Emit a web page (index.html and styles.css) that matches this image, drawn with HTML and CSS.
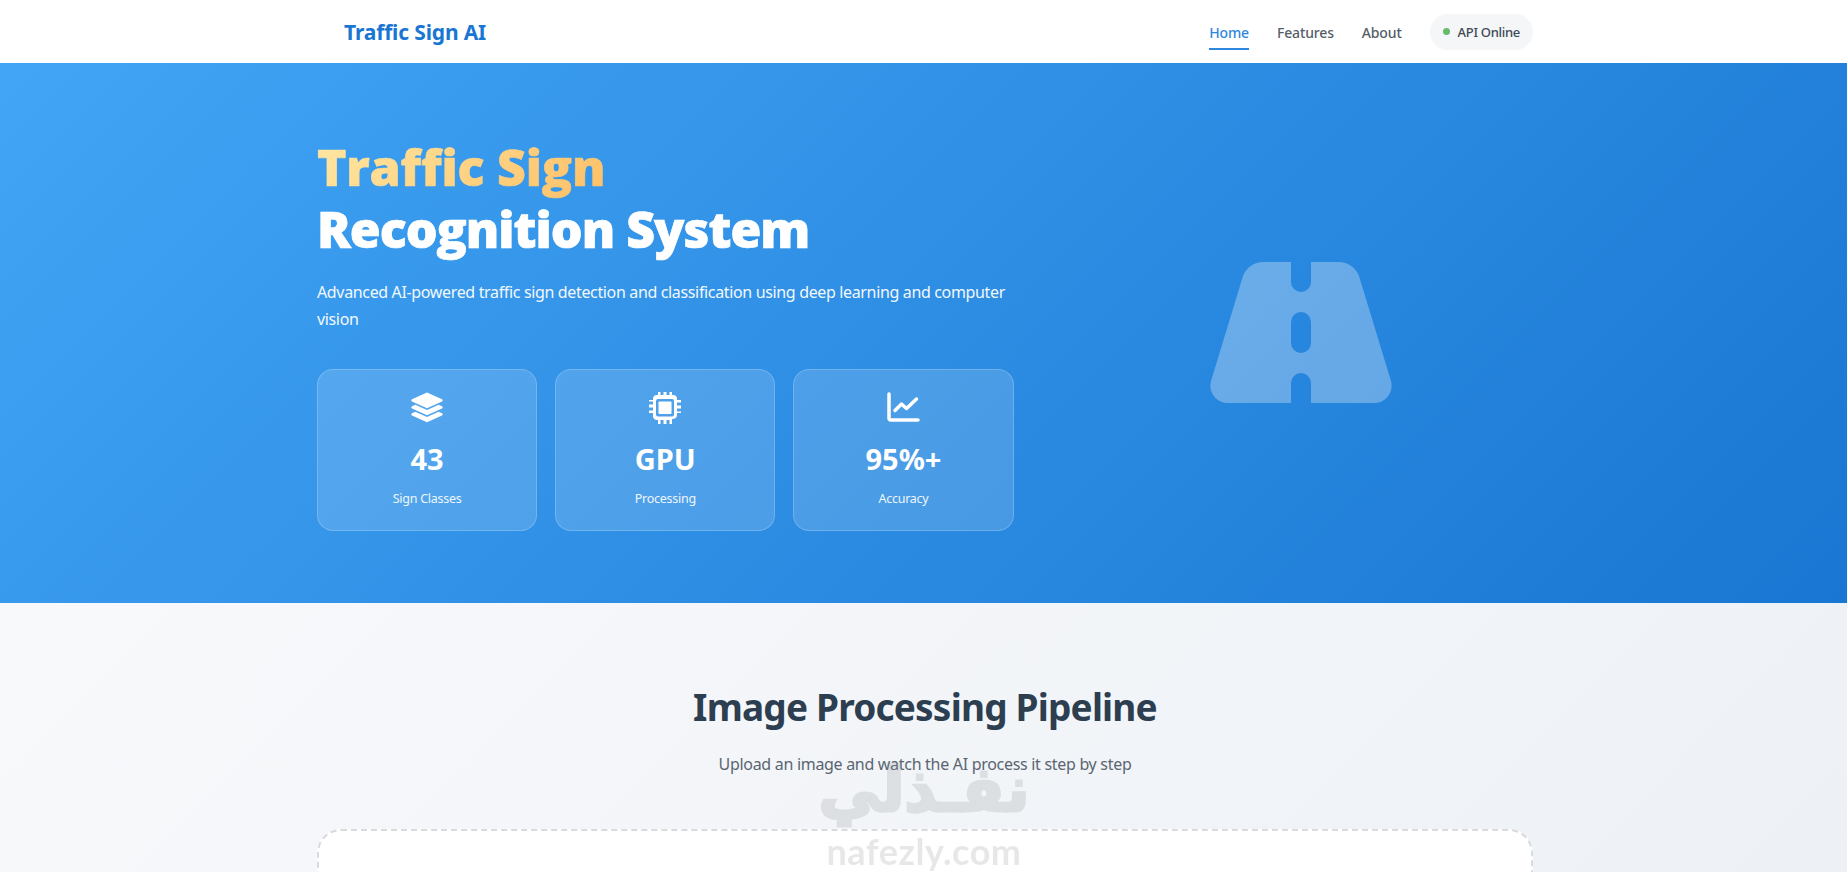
FILE: index.html
```html
<!DOCTYPE html>
<html>
  <head>
    <title>Traffic Sign AI</title>
    <meta charset="utf-8">
    <meta name="viewport" content="width=device-width, initial-scale=1">
    <link rel="stylesheet" href="styles.css">
  </head>
  <body>
    <header class="navbar">
      <div class="nav-inner">
        <a class="logo" href="#">Traffic Sign AI</a>
        <nav class="nav-links">
          <a class="nav-link active" href="#">Home</a>
          <a class="nav-link" href="#">Features</a>
          <a class="nav-link" href="#">About</a>
          <div class="status-pill"><span class="status-dot"></span>API Online</div>
        </nav>
      </div>
    </header>

    <section class="hero">
      <div class="hero-inner">
        <div class="hero-text">
          <h1 class="hero-title"><span class="gradient-text">Traffic Sign</span><br><span class="title-line">Recognition System</span></h1>
          <p class="hero-desc">Advanced AI-powered traffic sign detection and classification using deep learning and computer vision</p>
          <div class="stats">
            <div class="stat-card">
              <svg class="stat-icon" viewBox="0 0 34 34"><path d="M17 1.500 32 8.200c.9.5.9 1.700 0 2.200L17 17.200 2 10.400c-.9-.5-.9-1.700 0-2.200z"/><path d="M5.300 13.700 17 19l11.700-5.300 3.300 1.500c.9.5.9 1.700 0 2.200L17 24.200 2 17.400c-.9-.5-.9-1.700 0-2.200z"/><path d="M5.300 20.700 17 26l11.700-5.300 3.300 1.500c.9.5.9 1.700 0 2.200L17 31.200 2 24.400c-.9-.5-.9-1.700 0-2.200z"/></svg>
              <div class="stat-value">43</div>
              <div class="stat-label">Sign Classes</div>
            </div>
            <div class="stat-card">
              <svg class="stat-icon" viewBox="0 0 34 34"><path fill-rule="evenodd" d="M10 1h2.500v3h3V1h3v3h3V1H24v3h1a4 4 0 0 1 4 4v1h4v2.500h-4v3h4v3h-4v3h4V22h-4v1.500a4.500 4.500 0 0 1-4 4.500h-1v5h-2.500v-4h-3v4h-3v-4h-3v4H10v-4H9a4 4 0 0 1-4-4.500V22H1v-2.500h4v-3H1v-3h4v-3H1V9h4V8a4 4 0 0 1 4-4h1zM10 8a2 2 0 0 0-2 2v13.500a2 2 0 0 0 2 2h14a2 2 0 0 0 2-2V10a2 2 0 0 0-2-2z"/><rect x="10.500" y="10.500" width="13" height="12.500" rx="1"/></svg>
              <div class="stat-value">GPU</div>
              <div class="stat-label">Processing</div>
            </div>
            <div class="stat-card">
              <svg class="stat-icon" viewBox="0 0 34 34"><path class="chart-line" d="M3 3v24a2 2 0 0 0 2 2h27"/><path class="chart-line" d="M9 19.500l6.500-6.500 5 4.500L30.500 8"/></svg>
              <div class="stat-value">95%+</div>
              <div class="stat-label">Accuracy</div>
            </div>
          </div>
        </div>
        <div class="hero-visual">
          <svg class="road-icon" viewBox="0 0 182 141"><path class="road-shape" fill-rule="evenodd" d="M53 0H81V20a10 10 0 0 0 20 0V0H129c9 0 17 6 20 14l32 105c3 11-5 22-17 22H101V121a10 10 0 0 0-20 0V141H18C6 141-2 130 1 119L33 14C36 6 44 0 53 0zM91 50a10 10 0 0 0-10 10V81a10 10 0 0 0 20 0V60a10 10 0 0 0-10-10z"/></svg>
        </div>
      </div>
    </section>

    <main class="pipeline">
      <div class="pipeline-inner">
        <h2 class="section-title">Image Processing Pipeline</h2>
        <p class="section-sub">Upload an image and watch the AI process it step by step</p>
        <div class="upload-box"></div>
      </div>
    </main>

    <div class="watermark">
      <div class="wm-arabic" lang="ar" dir="rtl">نفـذلي</div>
      <div class="wm-latin">nafezly.com</div>
    </div>
  </body>
</html>
```

FILE: styles.css
```css
* {
  box-sizing: border-box;
  margin: 0;
  padding: 0;
}
html, body {
  height: 100%;
  overflow: hidden;
}
body {
  font-family: "Noto Sans", "Open Sans", sans-serif;
  background: #f5f7fa;
  color: #2c3e50;
  position: relative;
}
a {
  text-decoration: none;
}
.navbar {
  height: 63px;
  background: #fff;
}
.nav-inner {
  width: 1216px;
  height: 100%;
  margin-left: 317px;
  padding-left: 27px;
  display: flex;
  align-items: center;
  justify-content: space-between;
}
.logo {
  font-size: 21px;
  font-weight: 700;
  letter-spacing: -0.15px;
  color: #1976d2;
}
.nav-links {
  display: flex;
  align-items: center;
  gap: 28px;
}
.nav-link {
  font-size: 14px;
  font-weight: 500;
  letter-spacing: -0.15px;
  color: #555e68;
  padding: 9px 0 6px;
  border-bottom: 2px solid transparent;
}
.nav-link.active {
  color: #2f88dd;
  border-bottom-color: #2f88dd;
}
.status-pill {
  display: flex;
  align-items: center;
  gap: 8px;
  height: 36px;
  padding: 0 13px;
  border-radius: 18px;
  background: #f4f6f8;
  font-size: 13px;
  font-weight: 500;
  letter-spacing: -0.3px;
  color: #3f4a55;
}
.status-dot {
  width: 7px;
  height: 7px;
  border-radius: 50%;
  background: #66bb6a;
}
.hero {
  height: 540px;
  background: linear-gradient(135deg, #42a5f5 0%, #1976d2 100%);
  color: #fff;
}
.hero-inner {
  width: 1216px;
  height: 100%;
  margin-left: 317px;
  display: grid;
  grid-template-columns: 1.5fr 1fr;
  gap: 55px;
  align-items: center;
}
.hero-text {
  align-self: start;
  padding-top: 73px;
}
.hero-title {
  font-family: "Open Sans", sans-serif;
  font-size: 50px;
  font-weight: 800;
  line-height: 62px;
  -webkit-text-stroke: 0.7px #fff;
  margin-bottom: 19px;
}
.title-line {
  letter-spacing: -1px;
}
.gradient-text {
  background: linear-gradient(135deg, #ffe8a3, #fdbf66);
  -webkit-background-clip: text;
  background-clip: text;
  color: transparent;
  letter-spacing: -0.2px;
  -webkit-text-stroke: 0.7px transparent;
}
.hero-desc {
  font-size: 16px;
  line-height: 27px;
  letter-spacing: -0.35px;
  margin-bottom: 36px;
  color: #f2f8fe;
}
.stats {
  display: grid;
  grid-template-columns: repeat(3, 1fr);
  gap: 18px;
}
.stat-card {
  height: 162px;
  border: 1px solid rgba(255, 255, 255, 0.2);
  border-radius: 16px;
  background: rgba(255, 255, 255, 0.15);
  display: flex;
  flex-direction: column;
  align-items: center;
  padding-top: 21px;
}
.stat-icon {
  width: 34px;
  height: 34px;
  fill: #fff;
}
.chart-line {
  fill: none;
  stroke: #fff;
  stroke-width: 3.5;
  stroke-linecap: round;
  stroke-linejoin: round;
}
.stat-value {
  font-size: 29px;
  font-weight: 700;
  line-height: 40px;
  margin-top: 14px;
}
.stat-label {
  font-size: 12.5px;
  line-height: 18px;
  letter-spacing: -0.25px;
  margin-top: 11px;
  color: #eef6fd;
}
.hero-visual {
  display: flex;
  justify-content: center;
  padding-bottom: 2px;
}
.road-icon {
  width: 182px;
  height: 141px;
}
.road-shape {
  fill: rgba(255, 255, 255, 0.3);
}
.pipeline {
  height: 1000px;
  background: linear-gradient(135deg, #f8f9fb 0%, #e9eef4 100%);
}
.pipeline-inner {
  width: 1216px;
  margin-left: 317px;
  padding-top: 78px;
  text-align: center;
}
.section-title {
  font-size: 37px;
  font-weight: 700;
  line-height: 52px;
  letter-spacing: -0.8px;
  color: #2c3e50;
}
.section-sub {
  font-size: 16px;
  line-height: 24px;
  letter-spacing: -0.3px;
  margin-top: 19px;
  color: #5a6571;
}
.upload-box {
  height: 300px;
  margin-top: 53px;
  border: 2px dashed #d8dade;
  border-radius: 24px;
  background: #fff;
}
.watermark {
  position: absolute;
  left: 818px;
  top: 755px;
  width: 212px;
  text-align: center;
  color: #8a8d90;
  opacity: 0.2;
  pointer-events: none;
}
.wm-arabic {
  font-family: "DejaVu Sans", sans-serif;
  font-size: 62px;
  font-weight: 700;
  line-height: 70px;
  -webkit-text-stroke: 3px #8a8d90;
}
.wm-latin {
  font-family: "Lato", sans-serif;
  font-size: 36px;
  font-weight: 700;
  line-height: 34px;
  letter-spacing: 0.5px;
  margin-top: 9px;
}
```
